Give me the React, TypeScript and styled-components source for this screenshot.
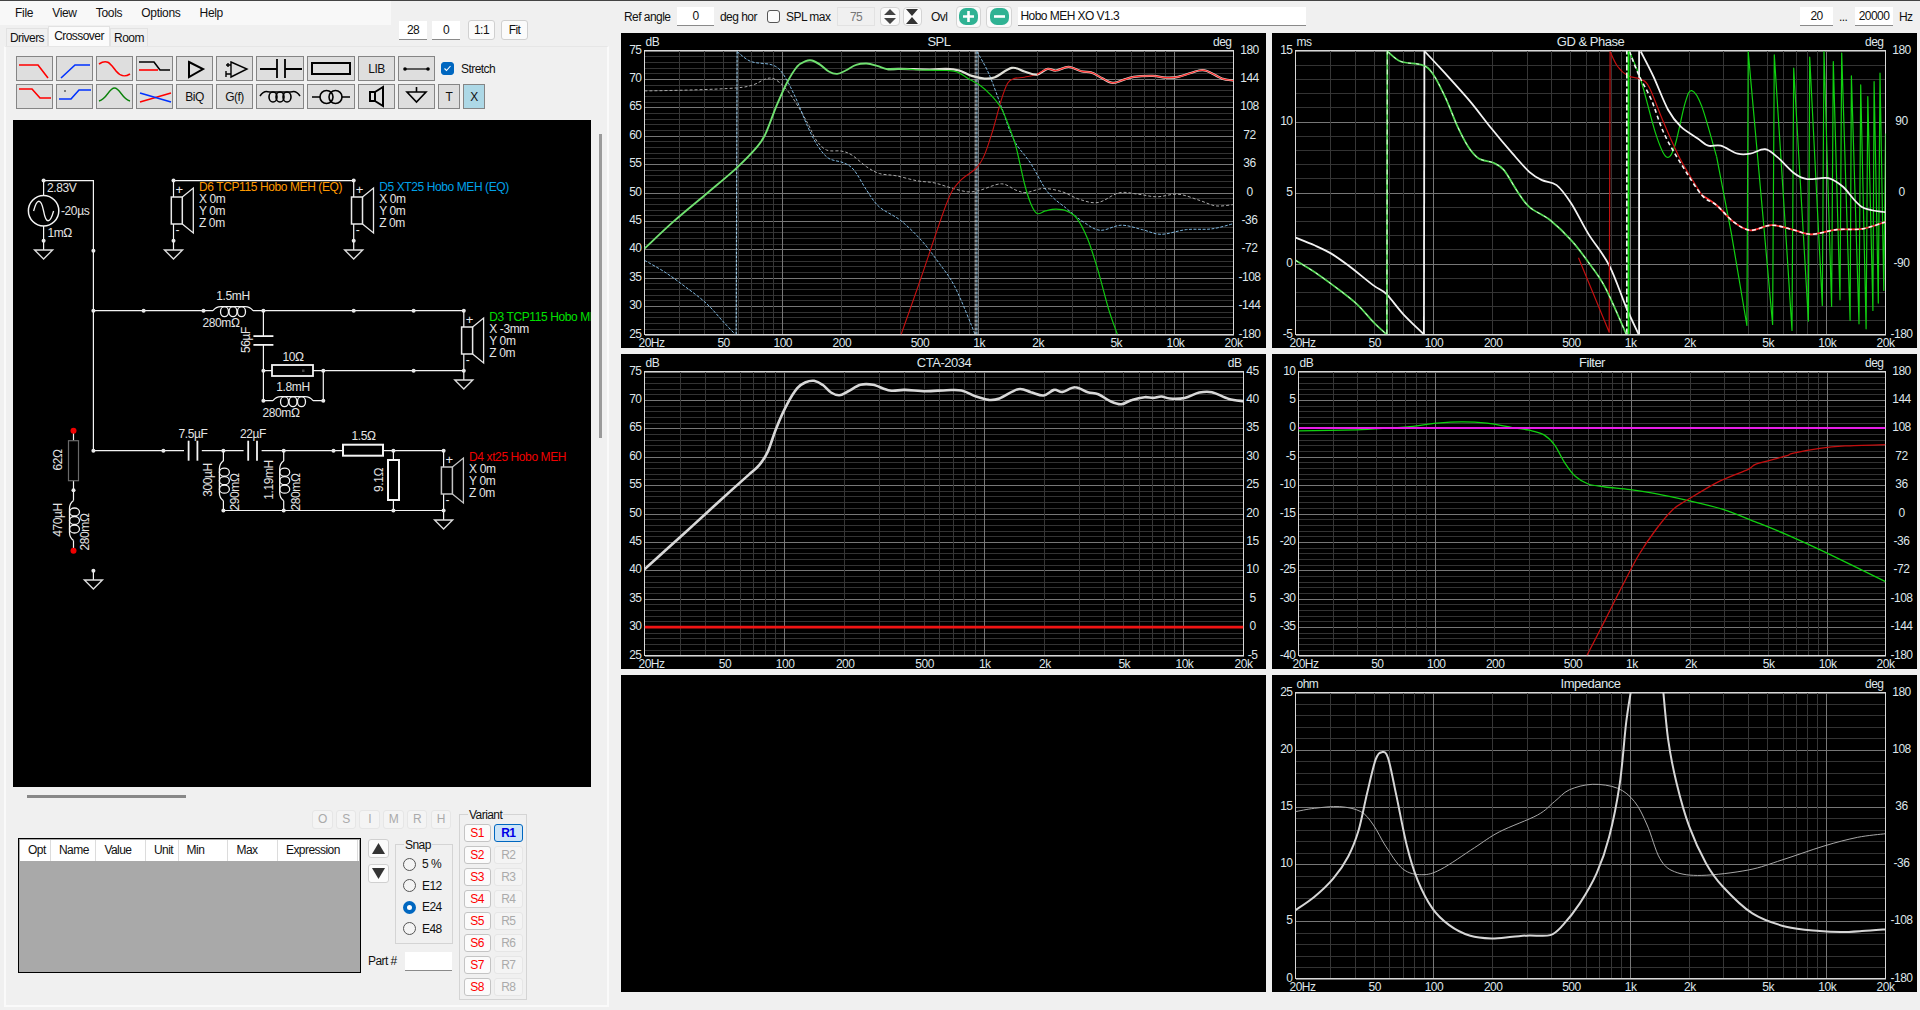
import React from 'react'
import styled, { createGlobalStyle } from 'styled-components'

const FONT = '"Liberation Sans", Arial, sans-serif'

const GlobalStyle = createGlobalStyle`
  html, body {
    margin: 0;
    padding: 0;
    background: #f0f0f0;
    overflow: hidden;
  }
  * {
    box-sizing: border-box;
  }
`

const Page = styled.div`
  width: 1920px;
  height: 1010px;
  background: #f0f0f0;
  border-top: 1px solid #444;
  display: flex;
  font-family: ${FONT};
  font-size: 12px;
  letter-spacing: -0.55px;
  color: #111;
  overflow: hidden;
`

const LeftColumn = styled.div`
  width: 609px;
  flex: none;
`

const MenuBar = styled.div`
  width: 391px;
  height: 24px;
  background: #f8f8f8;
  display: flex;
  align-items: center;
  gap: 19px;
  padding-left: 15px;
  letter-spacing: -0.3px;
`

const TabRow = styled.div`
  height: 21px;
  display: flex;
  align-items: flex-end;
  position: relative;
`

const Tab = styled.div<{ $active?: boolean; $w: number }>`
  width: ${p => p.$w}px;
  height: ${p => (p.$active ? 20 : 18)}px;
  margin-left: ${p => (p.$w === 42 ? 6 : 0)}px;
  padding-bottom: ${p => (p.$active ? 2 : 0)}px;
  background: ${p => (p.$active ? '#fbfbfb' : '#f0f0f0')};
  border: 1px solid #e2e2e2;
  border-bottom: none;
  display: flex;
  align-items: center;
  justify-content: center;
`

const ZoomControls = styled.div`
  display: flex;
  align-items: center;
  gap: 5px;
  margin-left: 251px;
  margin-bottom: 6px;
`

const SmallInput = styled.div<{ $w: number; $disabled?: boolean; $ml?: number; $left?: boolean }>`
  width: ${p => p.$w}px;
  height: 19px;
  margin-left: ${p => p.$ml ?? 0}px;
  background: ${p => (p.$disabled ? '#f0f0f0' : '#fff')};
  border: ${p => (p.$disabled ? '1px solid #e2e2e2' : 'none')};
  border-bottom: ${p => (p.$disabled ? '1px solid #e2e2e2' : '1px solid #8a8a8a')};
  color: ${p => (p.$disabled ? '#777' : '#111')};
  display: flex;
  align-items: center;
  justify-content: ${p => (p.$left ? 'flex-start' : 'center')};
  padding-left: ${p => (p.$left ? 3 : 0)}px;
  flex: none;
`

const PlainButton = styled.div<{ $ml?: number }>`
  width: 27px;
  height: 20px;
  margin-left: ${p => p.$ml ?? 0}px;
  background: #fbfbfb;
  border: 1px solid #d0d0d0;
  border-radius: 3px;
  display: flex;
  align-items: center;
  justify-content: center;
`

const Panel = styled.div`
  margin-left: 4px;
  width: 605px;
  height: 961px;
  background: #f0f0f0;
  border: 2px solid #fafafa;
  border-top: 1px solid #e6e6e6;
  padding: 9px 0 0 7px;
`

const ToolRow = styled.div`
  display: flex;
  align-items: center;
  margin-left: 3px;
  height: 25px;
  margin-bottom: 3px;
`

const ToolButton = styled.div<{ $w?: number; $bg?: string }>`
  width: ${p => p.$w ?? 37}px;
  height: 25px;
  margin-right: 3px;
  flex: none;
  background: ${p => p.$bg ?? '#dedede'};
  border: 1px solid #858585;
  display: flex;
  align-items: center;
  justify-content: center;
  color: #111;

  svg {
    display: block;
  }
`

const CheckBoxMark = styled.div<{ $on?: boolean; $ml?: number }>`
  width: 13px;
  height: 13px;
  margin-left: ${p => p.$ml ?? 0}px;
  border-radius: 3px;
  background: ${p => (p.$on ? '#0067c0' : '#fbfbfb')};
  border: 1px solid ${p => (p.$on ? '#0067c0' : '#555')};
  display: flex;
  align-items: center;
  justify-content: center;
  flex: none;
`

const StretchLabel = styled.span`
  margin-left: 7px;
`

const SchematicRow = styled.div`
  display: flex;
  margin-top: 11px;
`

const SchematicCanvas = styled.div`
  width: 578px;
  height: 667px;
  background: #000;
  overflow: hidden;

  svg {
    display: block;
  }
`

const VScrollThumb = styled.div`
  width: 3.5px;
  height: 304px;
  margin: 14px 0 0 7.5px;
  background: #9a9a9a;
`

const HScrollThumb = styled.div`
  width: 159px;
  height: 2.5px;
  margin: 8px 0 0 14px;
  background: #888;
`

const BottomArea = styled.div`
  display: flex;
  margin: 12px 0 0 5px;
`

const BottomLeft = styled.div`
  width: 434px;
  flex: none;
`

const FlagRow = styled.div`
  display: flex;
  justify-content: flex-end;
  gap: 3.2px;
  height: 19px;
  padding-right: 1px;
`

const FlagButton = styled.div`
  width: 20.5px;
  height: 19px;
  background: #f4f4f4;
  border: 1px solid #e6e6e6;
  border-radius: 3px;
  color: #aaa;
  display: flex;
  align-items: center;
  justify-content: center;
`

const TableRow = styled.div`
  display: flex;
  margin-top: 9px;
`

const PartTable = styled.div`
  width: 342.5px;
  height: 135px;
  flex: none;
  background: #a9a9a9;
  border: 1px solid #000;
  padding: 1px;
`

const TableHead = styled.div`
  display: flex;
  height: 21px;
  background: #fff;
`

const TableCol = styled.div<{ $w: number }>`
  width: ${p => p.$w}px;
  border-right: 1px solid #dcdcdc;
  padding-left: 8px;
  display: flex;
  align-items: center;
  flex: none;
`

const SideArea = styled.div`
  margin-left: 7.5px;
  width: 84px;
`

const SideTop = styled.div`
  display: flex;
  height: 105px;
  margin-top: 1px;
`

const ArrowColumn = styled.div`
  display: flex;
  flex-direction: column;
  gap: 6px;
  width: 21px;
  margin-right: 6px;
`

const ArrowButton = styled.div`
  width: 21px;
  height: 19px;
  background: #fbfbfb;
  border: 1px solid #d0d0d0;
  border-radius: 3px;
  display: flex;
  align-items: center;
  justify-content: center;
`

const GroupBox = styled.div<{ $w: number; $h: number; $mt?: number; $ml?: number }>`
  position: relative;
  width: ${p => p.$w}px;
  height: ${p => p.$h}px;
  margin-top: ${p => p.$mt ?? 0}px;
  margin-left: ${p => p.$ml ?? 0}px;
  border: 1px solid #d4d4d4;
  flex: none;
`

const GroupCaption = styled.span<{ $x: number }>`
  position: absolute;
  top: -6px;
  left: ${p => p.$x}px;
  background: #f0f0f0;
  padding: 0 1px;
  line-height: 12px;
`

const SnapList = styled.div`
  display: flex;
  flex-direction: column;
  gap: 8.5px;
  padding: 13px 0 0 7px;
`

const SnapItem = styled.div`
  display: flex;
  align-items: center;
  height: 13px;
  gap: 6px;
`

const Radio = styled.span<{ $on?: boolean }>`
  width: 13px;
  height: 13px;
  border-radius: 50%;
  flex: none;
  background: ${p => (p.$on ? '#fff' : '#f4f4f4')};
  border: ${p => (p.$on ? '4px solid #0067c0' : '1px solid #555')};
`

const PartRow = styled.div`
  display: flex;
  align-items: center;
  justify-content: space-between;
  margin-top: 8px;
`

const VariantGrid = styled.div`
  display: grid;
  grid-template-columns: 27px 29.5px;
  column-gap: 3px;
  row-gap: 4px;
  padding: 9px 0 0 3.5px;
`

const VariantButton = styled.div<{ $kind: 's' | 'r' | 'sel' }>`
  height: 18px;
  border-radius: 3px;
  display: flex;
  align-items: center;
  justify-content: center;
  font-weight: ${p => (p.$kind === 'sel' ? 700 : 400)};
  background: ${p => (p.$kind === 's' ? '#fbfbfb' : p.$kind === 'sel' ? '#cce4f7' : '#f4f4f4')};
  color: ${p => (p.$kind === 's' ? '#f00' : p.$kind === 'sel' ? '#0000e6' : '#aaa')};
  border: 1px solid ${p => (p.$kind === 's' ? '#c4c4c4' : p.$kind === 'sel' ? '#0067c0' : '#e6e6e6')};
`

const RightColumn = styled.div`
  margin-left: 12px;
  width: 1299px;
  flex: none;
`

const TopBar = styled.div`
  height: 32px;
  display: flex;
  align-items: center;
  padding: 0 0 1px 3px;
`

const BarText = styled.span<{ $ml?: number; $w: number }>`
  margin-left: ${p => p.$ml ?? 0}px;
  width: ${p => p.$w}px;
  flex: none;
`

const IconButton = styled.div<{ $w: number; $ml?: number }>`
  width: ${p => p.$w}px;
  height: ${p => (p.$w > 22 ? 22 : 19)}px;
  margin-left: ${p => p.$ml ?? 0}px;
  background: #fbfbfb;
  border: 1px solid #d4d4d4;
  border-radius: 4px;
  display: flex;
  align-items: center;
  justify-content: center;
  flex: none;
`

const ChartGrid = styled.div`
  display: grid;
  grid-template-columns: 645px 644.5px;
  grid-template-rows: 315px 315px 317px;
  column-gap: 6px;
  row-gap: 6px;
`

const ChartPanel = styled.div`
  background: #000;

  svg {
    display: block;
  }
`

type Pt = [number, number]
type Series = { pts: Pt[]; color: string; width: number; dash?: string; straight?: boolean }
type Box = { left: number; top: number; width: number; height: number }

const smoothPath = (p: Pt[]) => {
  let d = `M${p[0][0].toFixed(1)},${p[0][1].toFixed(1)}`
  for (let i = 0; i < p.length - 1; i++) {
    const a = p[Math.max(0, i - 1)]
    const b = p[i]
    const c = p[i + 1]
    const e = p[Math.min(p.length - 1, i + 2)]
    const c1x = b[0] + (c[0] - a[0]) / 6
    const c1y = b[1] + (c[1] - a[1]) / 6
    const c2x = c[0] - (e[0] - b[0]) / 6
    const c2y = c[1] - (e[1] - b[1]) / 6
    d += ` C${c1x.toFixed(1)},${c1y.toFixed(1)} ${c2x.toFixed(1)},${c2y.toFixed(1)} ${c[0].toFixed(1)},${c[1].toFixed(1)}`
  }
  return d
}

const FREQ_LINES = [30, 40, 50, 60, 70, 80, 90, 200, 300, 400, 500, 600, 700, 800, 900, 2000, 3000, 4000, 5000, 6000, 7000, 8000, 9000]
const FREQ_MAJOR = [100, 1000, 10000]
const FREQ_LABELS: [number, string][] = [
  [50, '50'], [100, '100'], [200, '200'], [500, '500'], [1000, '1k'], [2000, '2k'], [5000, '5k'], [10000, '10k'],
]

type ChartProps = {
  title: string
  leftUnit: string
  rightUnit: string
  height: number
  plot: Box
  src: [number, number, number, number]
  left: string[]
  right: string[]
  rightOffset?: number
  series: Series[]
}

const PHASE_DEG = ['180', '144', '108', '72', '36', '0', '-36', '-72', '-108', '-144', '-180']
const LABEL = '#dfe6ea'

const Chart: React.FC<ChartProps> = ({ title, leftUnit, rightUnit, height, plot, src, left, right, rightOffset = 16, series }) => {
  const w = 645
  const fx = (f: number) => plot.left + (plot.width * Math.log(f / 20)) / Math.log(1000)
  const mapPts = (pts: Pt[]): Pt[] =>
    pts.map(([x, y]) => [
      plot.left + ((x - src[0]) / (src[2] - src[0])) * plot.width,
      plot.top + ((y - src[1]) / (src[3] - src[1])) * plot.height,
    ])
  const majors = left.length - 1
  const hLines = Array.from({ length: majors * 5 + 1 }, (_, i) => i)
  const bottom = plot.top + plot.height
  const rightEdge = plot.left + plot.width
  const clipId = `clip-${title.replace(/\W/g, '')}`
  return (
    <ChartPanel>
      <svg width={w} height={height} fontFamily={FONT} fontSize="12" letterSpacing="-0.5">
        <g shapeRendering="crispEdges" strokeWidth="1">
          {hLines.map(i => (
            <line
              key={i}
              x1={plot.left}
              x2={rightEdge}
              y1={Math.round(plot.top + (plot.height * i) / (majors * 5)) + 0.5}
              y2={Math.round(plot.top + (plot.height * i) / (majors * 5)) + 0.5}
              stroke={i % 5 === 0 ? '#777' : '#333'}
            />
          ))}
          {FREQ_LINES.map(f => (
            <line key={f} x1={Math.round(fx(f)) + 0.5} x2={Math.round(fx(f)) + 0.5} y1={plot.top} y2={bottom} stroke="#363636" />
          ))}
          {FREQ_MAJOR.map(f => (
            <line key={f} x1={Math.round(fx(f)) + 0.5} x2={Math.round(fx(f)) + 0.5} y1={plot.top} y2={bottom} stroke="#777" />
          ))}
          <rect x={plot.left} y={plot.top} width={plot.width} height={plot.height} fill="none" stroke="#d8d8d8" />
        </g>
        <clipPath id={clipId}>
          <rect x={plot.left} y={plot.top} width={plot.width} height={plot.height} />
        </clipPath>
        <g clipPath={`url(#${clipId})`} fill="none" strokeLinejoin="round">
          {series.map((s, i) => {
            const m = mapPts(s.pts)
            const d = s.straight ? m.map((p, j) => `${j ? 'L' : 'M'}${p[0].toFixed(1)},${p[1].toFixed(1)}`).join(' ') : smoothPath(m)
            return <path key={i} d={d} stroke={s.color} strokeWidth={s.width} strokeDasharray={s.dash} />
          })}
        </g>
        <g fill={LABEL}>
          <text x={plot.left + 1} y={12.5}>{leftUnit}</text>
          <text x={plot.left + plot.width / 2} y={13} textAnchor="middle" fontSize="13">{title}</text>
          <text x={rightEdge - 2} y={12.5} textAnchor="end">{rightUnit}</text>
          {left.map((t, i) => (
            <text key={i} x={plot.left - 3} y={plot.top + (plot.height * i) / majors + 3} textAnchor="end">{t}</text>
          ))}
          {right.map((t, i) => (
            <text key={i} x={rightEdge + rightOffset} y={plot.top + (plot.height * i) / (right.length - 1) + 3} textAnchor="middle">{t}</text>
          ))}
          <text x={plot.left + 7} y={bottom + 12} textAnchor="middle">20Hz</text>
          {FREQ_LABELS.map(([f, t]) => (
            <text key={f} x={fx(f) + 1} y={bottom + 12} textAnchor="middle">{t}</text>
          ))}
          <text x={rightEdge} y={bottom + 12} textAnchor="middle">20k</text>
        </g>
      </svg>
    </ChartPanel>
  )
}

// curve points are traced in plot coordinates of each chart
const SPL_TAIL: Pt[] = [[1015, 224], [1040, 207], [1060, 212], [1090, 201], [1120, 214], [1145, 218], [1170, 235], [1195, 249], [1220, 240], [1245, 231], [1290, 228], [1320, 233], [1350, 231], [1400, 212], [1420, 214], [1455, 236], [1482, 242]]
const SPL_GREEN_A: Pt[] = [[82, 745], [150, 665], [230, 580], [300, 505], [350, 440], [370, 400], [395, 320], [420, 250], [445, 200], [465, 184], [480, 182], [500, 195], [520, 215], [540, 222], [560, 212], [585, 195], [610, 191], [635, 198], [660, 208], [690, 207]]
const SPL_GREEN_B: Pt[] = [[660, 208], [690, 207], [720, 209], [760, 211], [800, 212], [825, 216], [850, 235], [880, 257], [905, 285], [930, 325], [950, 385], [965, 440], [985, 550], [1000, 610], [1015, 640], [1035, 632], [1060, 627], [1085, 632], [1110, 655], [1135, 715], [1160, 810], [1185, 925], [1206, 1002]]
const SPL_BLUE = '#7db6de'
const SPL_SERIES: Series[] = [
  { color: '#aaa', width: 1, dash: '3 2', pts: [[82, 273], [200, 270], [300, 264], [340, 255], [370, 237], [390, 237], [415, 262], [440, 305], [470, 370], [490, 420], [515, 450], [550, 453], [575, 465], [610, 500], [640, 520], [680, 527], [730, 542], [770, 548], [810, 563], [850, 575], [880, 570], [930, 551], [965, 570], [990, 577], [1030, 565], [1075, 575], [1115, 597], [1160, 607], [1210, 578], [1255, 582], [1300, 590], [1350, 582], [1400, 600], [1440, 617], [1482, 613]] },
  { color: SPL_BLUE, width: 1, dash: '3 1.5', pts: [[82, 780], [130, 815], [180, 860], [230, 910], [270, 965], [298, 1002]] },
  { color: SPL_BLUE, width: 1, dash: '3 1.5', pts: [[302, 155], [335, 185], [385, 195], [410, 220], [440, 290], [470, 380], [495, 440], [520, 475], [555, 488], [580, 510], [610, 570], [640, 620], [690, 660], [740, 720], [780, 785], [820, 860], [868, 1002]] },
  { color: SPL_BLUE, width: 1, dash: '3 1.5', pts: [[872, 155], [900, 220], [930, 320], [960, 420], [1000, 490], [1040, 575], [1085, 625], [1125, 665], [1165, 690], [1215, 675], [1265, 688], [1310, 702], [1370, 688], [1430, 686], [1482, 670]] },
  { color: '#9fcbe6', width: 1.2, dash: '3 1', straight: true, pts: [[300, 1002], [302, 152]] },
  { color: '#9fcbe6', width: 1.2, dash: '3 1', straight: true, pts: [[872, 1002], [872, 152]] },
  { color: '#cfcfcf', width: 1, dash: '3 1', straight: true, pts: [[868, 1002], [868, 152]] },
  { color: '#c41010', width: 1.1, pts: [[692, 1002], [740, 830], [800, 610], [830, 545], [870, 505], [890, 465], [910, 390], [930, 300], [945, 250], [960, 236], [985, 232], [1015, 224]] },
  { color: '#e0e0d8', width: 2.2, pts: [[660, 208], [690, 207], [760, 209], [800, 207], [830, 212], [860, 228], [890, 236], [915, 232], [955, 204], [985, 215], ...SPL_TAIL] },
  { color: '#ff2a2a', width: 1.2, pts: SPL_TAIL },
  { color: '#10c810', width: 1.2, pts: SPL_GREEN_B },
  { color: '#70e070', width: 1.9, pts: SPL_GREEN_A },
]

const GD_MID: Pt[] = [[304, 155], [335, 185], [385, 195], [410, 220], [440, 290], [470, 380], [495, 440], [520, 475], [555, 488], [580, 510], [610, 570], [640, 620], [690, 660], [740, 720], [780, 785], [820, 860], [870, 1000]]
const GD_START: Pt[] = [[85, 780], [130, 815], [180, 860], [230, 910], [270, 965], [300, 1000]]
const GD_TAIL: Pt[] = [[878, 155], [900, 225], [930, 300], [960, 400], [1000, 490], [1050, 585], [1085, 615], [1125, 665], [1165, 690], [1215, 675], [1265, 688], [1310, 702], [1370, 688], [1430, 686], [1486, 665]]
const GD_SERIES: Series[] = [
  { color: '#10d010', width: 1.2, straight: true, pts: [[1085, 470], [1120, 700], [1157, 975], [1160, 155], [1218, 972], [1222, 165], [1264, 990], [1268, 205], [1303, 962], [1306, 172], [1336, 915], [1340, 155], [1358, 918], [1362, 185], [1378, 898], [1382, 160], [1402, 960], [1405, 228], [1423, 970], [1427, 255], [1440, 985], [1444, 290], [1456, 930], [1459, 245], [1469, 908], [1473, 220], [1482, 870], [1486, 400]] },
  { color: '#10d010', width: 1.2, pts: [[878, 155], [905, 240], [940, 400], [965, 470], [985, 440], [1010, 310], [1026, 272], [1050, 320], [1085, 470]] },
  { color: '#f2f2f2', width: 1.8, pts: [[85, 712], [130, 735], [170, 760], [210, 795], [270, 855], [300, 880], [340, 940], [390, 1002]] },
  { color: '#f2f2f2', width: 1.8, straight: true, pts: [[390, 1002], [391, 152]] },
  { color: '#f2f2f2', width: 1.8, pts: [[392, 155], [440, 220], [500, 305], [550, 385], [600, 460], [640, 515], [670, 540], [705, 555], [740, 610], [780, 700], [830, 795], [870, 920], [900, 1002]] },
  { color: '#f2f2f2', width: 1.8, straight: true, pts: [[901, 1002], [901, 152]] },
  { color: '#f2f2f2', width: 1.8, pts: [[905, 155], [935, 230], [970, 330], [1000, 380], [1040, 415], [1065, 437], [1095, 437], [1135, 461], [1165, 461], [1200, 447], [1230, 472], [1270, 520], [1300, 537], [1350, 534], [1385, 560], [1430, 620], [1486, 636]] },
  { color: '#c40f0f', width: 1.2, straight: true, pts: [[757, 772], [830, 995], [832, 155]] },
  { color: '#c40f0f', width: 1.2, pts: [[832, 155], [850, 200], [875, 228], [905, 238], [925, 262], [960, 370], [1000, 480], [1050, 585]] },
  { color: '#ff3030', width: 1.8, pts: [[1050, 585], [1085, 615], [1125, 665], [1165, 690], [1215, 675], [1265, 688], [1310, 702], [1370, 688], [1430, 686], [1486, 665]] },
  { color: '#f5f5f5', width: 1.6, dash: '4 3', pts: GD_TAIL },
  { color: '#f5f5f5', width: 1.8, dash: '6 2', straight: true, pts: [[872, 1002], [872, 152]] },
  { color: '#10e010', width: 1.8, straight: true, pts: [[876, 1002], [876, 155]] },
  { color: '#56d856', width: 1.8, pts: GD_START },
  { color: '#56d856', width: 1.8, pts: GD_MID },
  { color: '#e8ffe8', width: 0.9, dash: '3 5', pts: GD_START },
  { color: '#e8ffe8', width: 0.9, dash: '3 5', pts: GD_MID },
  { color: '#56d856', width: 1.8, straight: true, pts: [[302, 1002], [303, 152]] },
  { color: '#f0fff0', width: 1, dash: '5 5', straight: true, pts: [[302, 1002], [303, 152]] },
]

const CTA_SERIES: Series[] = [
  { color: '#f01414', width: 2.6, straight: true, pts: [[82, 831], [1505, 831]] },
  { color: '#d8d8d8', width: 2.6, pts: [[82, 658], [130, 603], [180, 546], [230, 488], [290, 419], [330, 374], [355, 345], [375, 305], [395, 235], [420, 165], [445, 115], [465, 97], [485, 93], [505, 105], [525, 128], [545, 136], [565, 125], [595, 105], [625, 105], [665, 122], [700, 120], [750, 124], [800, 121], [835, 122], [870, 140], [900, 150], [925, 146], [970, 118], [1000, 127], [1030, 137], [1055, 120], [1075, 126], [1105, 112], [1135, 127], [1160, 133], [1190, 155], [1215, 163], [1240, 150], [1270, 142], [1290, 144], [1310, 140], [1330, 146], [1365, 144], [1400, 128], [1430, 127], [1470, 147], [1505, 154]] },
]

const FILTER_SERIES: Series[] = [
  { color: '#10d010', width: 1.3, pts: [[92, 243], [230, 240], [300, 235], [350, 231], [420, 220], [480, 216], [540, 220], [600, 233], [640, 241], [675, 255], [700, 285], [725, 340], [750, 380], [780, 402], [820, 411], [880, 419], [940, 431], [1015, 451], [1100, 478], [1180, 517], [1250, 553], [1340, 605], [1486, 695]] },
  { color: '#e61ee6', width: 2, straight: true, pts: [[92, 234], [1486, 234]] },
  { color: '#c40f0f', width: 1.3, pts: [[777, 916], [820, 810], [860, 710], [900, 615], [940, 540], [980, 480], [1015, 450], [1090, 395], [1160, 358], [1180, 342], [1250, 318], [1265, 310], [1330, 295], [1390, 288], [1486, 284]] },
]

const IMPEDANCE_SERIES: Series[] = [
  { color: '#a8a8a8', width: 1, pts: [[85, 425], [130, 415], [190, 410], [240, 425], [270, 465], [300, 530], [340, 597], [385, 614], [430, 598], [510, 533], [570, 485], [660, 435], [700, 395], [735, 360], [790, 343], [850, 355], [890, 395], [920, 465], [950, 565], [985, 605], [1050, 616], [1160, 600], [1240, 570], [1340, 528], [1420, 502], [1486, 491]] },
  { color: '#d6d6d6', width: 2, pts: [[85, 720], [130, 680], [175, 625], [210, 560], [235, 480], [255, 370], [275, 270], [290, 247], [305, 265], [325, 380], [350, 530], [375, 630], [410, 715], [450, 765], [500, 797], [550, 805], [600, 800], [640, 796], [690, 795], [720, 765], [760, 700], [800, 610], [830, 500], [855, 340], [870, 160], [882, 60]] },
  { color: '#d6d6d6', width: 2, pts: [[958, 60], [970, 210], [990, 340], [1020, 470], [1060, 580], [1100, 650], [1170, 730], [1250, 770], [1330, 783], [1380, 786], [1430, 783], [1486, 778]] },
]

// schematic parts, coordinates are page pixels
const WIRE = '#f4f4f4'

const Dot: React.FC<{ x: number; y: number; red?: boolean }> = ({ x, y, red }) => (
  <circle cx={x} cy={y} r={red ? 3 : 2} fill={red ? '#f00000' : '#e8e8e8'} />
)

const Wire: React.FC<{ d: string }> = ({ d }) => <path d={d} fill="none" stroke={WIRE} strokeWidth="1.2" />

const Ground: React.FC<{ x: number; y: number }> = ({ x, y }) => (
  <path d={`M${x - 9},${y} L${x + 9},${y} L${x},${y + 9} Z`} fill="none" stroke="#dcdcdc" strokeWidth="1.4" />
)

const Coil: React.FC<{ x: number; y: number; rot?: number }> = ({ x, y, rot = 0 }) => (
  <g transform={`translate(${x},${y}) rotate(${rot})`} fill="none" stroke={WIRE} strokeWidth="1.3">
    <path d="M-20,0 Q-17,-4 -12,-4 L12,-4 Q17,-4 20,0" />
    <ellipse cx="-8.5" cy="1" rx="4" ry="5" />
    <ellipse cx="0" cy="1" rx="4" ry="5" />
    <ellipse cx="8.5" cy="1" rx="4" ry="5" />
  </g>
)

const Cap: React.FC<{ x: number; y: number; vertical?: boolean }> = ({ x, y, vertical }) => (
  <g transform={`translate(${x},${y}) rotate(${vertical ? 90 : 0})`} stroke={WIRE} strokeWidth="1.8">
    <line x1="-4.4" x2="-4.4" y1="-10" y2="10" />
    <line x1="4.4" x2="4.4" y1="-10" y2="10" />
  </g>
)

const Speaker: React.FC<{ x: number; y: number; color: string; lines: string[]; stroke?: string }> = ({ x, y, color, lines, stroke = '#e8e8e8' }) => {
  const left = x - 2.2
  return (
    <g>
      <rect x={left} y={y} width={11} height={27} fill="#000" stroke={stroke} strokeWidth="1.5" />
      <path d={`M${left + 11},${y} L${left + 22},${y - 9} L${left + 22},${y + 36} L${left + 11},${y + 27}`} fill="none" stroke={stroke} strokeWidth="1.3" />
      <text x={x + 2} y={y - 3.5} fill="#e8e8e8" fontSize="13">+</text>
      <text x={x + 2} y={y + 37} fill="#e8e8e8">-</text>
      <text x={x + 25.5} y={y - 6} fill={color}>{lines[0]}</text>
      {lines.slice(1).map((t, i) => (
        <text key={t} x={x + 25.5} y={y + 6 + i * 12} fill="#e4e4e4">{t}</text>
      ))}
    </g>
  )
}

const VText: React.FC<{ x: number; y: number; children: React.ReactNode }> = ({ x, y, children }) => (
  <text transform={`translate(${x},${y}) rotate(-90)`} textAnchor="middle" fill="#e4e4e4">{children}</text>
)

const CText: React.FC<{ x: number; y: number; children: React.ReactNode }> = ({ x, y, children }) => (
  <text x={x} y={y} textAnchor="middle" fill="#e4e4e4">{children}</text>
)

const Schematic: React.FC = () => (
  <SchematicCanvas>
    <svg width="578" height="667" viewBox="13 120 578 667" fontFamily={FONT} fontSize="12" letterSpacing="-0.4">
      {/* source */}
      <Wire d="M43.6,241 V226 M43.6,195 V180.6 H93.4 V450.7 M43.6,241 V250" />
      <circle cx="43.6" cy="210.7" r="15.2" fill="none" stroke={WIRE} strokeWidth="1.5" />
      <path d="M33.6,211 C37,198 41,198 43.6,211 C46,224 50,224 53.6,211" fill="none" stroke={WIRE} strokeWidth="1.3" />
      <Dot x={43.6} y={180.6} />
      <Dot x={43.6} y={240.7} />
      <Dot x={93.4} y={250.7} />
      <Ground x={43.6} y={250} />
      <text x={47} y={192} fill="#e4e4e4">2.83V</text>
      <text x={61} y={215} fill="#e4e4e4">-20µs</text>
      <text x={47.5} y={237} fill="#e4e4e4">1mΩ</text>

      {/* EQ drivers */}
      <Wire d="M173.5,180.6 H353.7 M173.5,180.6 V197 M353.7,180.6 V197 M173.5,224 V250 M353.7,224 V250" />
      <Dot x={173.5} y={180.6} />
      <Dot x={353.7} y={180.6} />
      <Dot x={173.5} y={240.7} />
      <Dot x={353.7} y={240.7} />
      <Ground x={173.5} y={250} />
      <Ground x={353.7} y={250} />
      <Speaker x={173.5} y={197} color="#ff9900" lines={['D6 TCP115 Hobo MEH (EQ)', 'X 0m', 'Y 0m', 'Z 0m']} />
      <Speaker x={353.7} y={197} color="#00a2e8" lines={['D5 XT25 Hobo MEH (EQ)', 'X 0m', 'Y 0m', 'Z 0m']} />

      {/* woofer branch */}
      <Wire d="M93.4,310.7 H213 M253,310.7 H463.8 V327 M463.8,354 V380 M263.4,310.7 V336 M263.4,345 V400.7 M263.4,370.7 H272 M313,370.7 H463.8 M323.3,370.7 V400.7 M263.4,400.7 H273 M313,400.7 H323.3" />
      <Coil x={233} y={310.7} />
      <Coil x={293} y={400.7} />
      <Cap x={263.4} y={340.5} vertical />
      <rect x="272" y="365" width="41" height="11" fill="#000" stroke={WIRE} strokeWidth="1.8" />
      <rect x="302" y="369.5" width="2.5" height="2.5" fill="#444" />
      {[[93.4, 310.7], [143.6, 310.7], [203.5, 310.7], [263.4, 310.7], [353.7, 310.7], [413.6, 310.7], [463.8, 310.7], [263.4, 370.7], [323.3, 370.7], [413.6, 370.7], [463.8, 370.7], [263.4, 400.7], [323.3, 400.7]].map(([x, y]) => (
        <Dot key={`${x}-${y}`} x={x} y={y} />
      ))}
      <CText x={233} y={300}>1.5mH</CText>
      <CText x={221} y={327}>280mΩ</CText>
      <VText x={250} y={340}>56µF</VText>
      <CText x={293} y={361}>10Ω</CText>
      <CText x={293} y={391}>1.8mH</CText>
      <CText x={281} y={417}>280mΩ</CText>
      <Speaker x={463.8} y={327} color="#00e000" lines={['D3 TCP115 Hobo MEH', 'X -3mm', 'Y 0m', 'Z 0m']} />
      <Ground x={463.8} y={380} />

      {/* tweeter branch */}
      <Wire d="M93.4,450.7 H184 M201.8,450.7 H243.6 M261.6,450.7 H343 M383,450.7 H443.6 V467 M443.6,494 V520 M393.4,450.7 V460 M393.4,500 V510.5 M223.4,510.5 H443.6 M223.4,450.7 V461 M223.4,500.7 V510.5 M283.7,450.7 V461 M283.7,500.7 V510.5" />
      <Cap x={193} y={450.7} />
      <Cap x={252.6} y={450.7} />
      <rect x="343" y="444.7" width="40" height="11" fill="#000" stroke={WIRE} strokeWidth="2" />
      <rect x="388" y="460" width="11" height="40" fill="#000" stroke={WIRE} strokeWidth="2" />
      <Coil x={223.4} y={480.7} rot={-90} />
      <Coil x={283.7} y={480.7} rot={-90} />
      {[[93.4, 450.7], [163.4, 450.7], [223.4, 450.7], [283.7, 450.7], [333.5, 450.7], [393.4, 450.7], [443.6, 450.7], [223.4, 510.5], [283.7, 510.5], [393.4, 510.5], [443.6, 510.5]].map(([x, y]) => (
        <Dot key={`${x}-${y}`} x={x} y={y} />
      ))}
      <CText x={193} y={438}>7.5µF</CText>
      <CText x={253} y={438}>22µF</CText>
      <CText x={363.5} y={440}>1.5Ω</CText>
      <VText x={212} y={480}>300µH</VText>
      <VText x={239} y={492}>290mΩ</VText>
      <VText x={272.5} y={480}>1.19mH</VText>
      <VText x={300} y={492}>280mΩ</VText>
      <VText x={382.5} y={480}>9.1Ω</VText>
      <Speaker x={443.6} y={467} color="#f00000" stroke="#c4c4c4" lines={['D4 xt25 Hobo MEH', 'X 0m', 'Y 0m', 'Z 0m']} />
      <Ground x={443.6} y={520} />

      {/* parked parts */}
      <Wire d="M73.5,430.7 V440.7 M73.5,480.7 V500.5 M73.5,540.5 V550.7" />
      <rect x="68.5" y="440.7" width="10" height="40" fill="#000" stroke="#6a6a6a" strokeWidth="1.2" />
      <Coil x={73.5} y={520.5} rot={-90} />
      <Dot x={73.5} y={430.7} red />
      <Dot x={73.5} y={490.3} />
      <Dot x={73.5} y={550.7} red />
      <VText x={61.5} y={460}>62Ω</VText>
      <VText x={61.5} y={520}>470µH</VText>
      <VText x={89} y={532}>280mΩ</VText>
      <Wire d="M93.4,570.7 V580" />
      <Dot x={93.4} y={570.7} />
      <Ground x={93.4} y={580} />
    </svg>
  </SchematicCanvas>
)

// toolbar icons
const Glyph: React.FC<{ w?: number; children: React.ReactNode }> = ({ w = 35, children }) => (
  <svg width={w} height="23" viewBox={`0 0 ${w} 23`} fill="none" strokeWidth="1.6">
    {children}
  </svg>
)

const Toolbar: React.FC = () => (
  <>
    <ToolRow>
      <ToolButton><Glyph><path d="M2,8 H21 L31,21" stroke="#f00" /></Glyph></ToolButton>
      <ToolButton><Glyph><path d="M4,21 L18,8 H33" stroke="#0032ff" /></Glyph></ToolButton>
      <ToolButton><Glyph><path d="M2,7 C11,1 14,8 19,14 C24,20 28,20 33,17" stroke="#f00" /></Glyph></ToolButton>
      <ToolButton>
        <Glyph>
          <path d="M2,5 H17 L23,13 H33" stroke="#000" />
          <path d="M2,13 H21" stroke="#f00" />
        </Glyph>
      </ToolButton>
      <ToolButton><Glyph><path d="M12,5 L26,12 L12,20 Z" stroke="#000" strokeWidth="2" /></Glyph></ToolButton>
      <ToolButton>
        <Glyph>
          <path d="M14,5 L30,12 L14,20 Z M9,8 H14 M9,17 H14 M11,6 V10 M9,14 V20" stroke="#000" strokeWidth="1.4" />
        </Glyph>
      </ToolButton>
      <ToolButton $w={48}>
        <Glyph w={46}><path d="M3,12 H20 M20,2 V21 M28,2 V21 M28,12 H45" stroke="#000" strokeWidth="1.8" /></Glyph>
      </ToolButton>
      <ToolButton $w={48}>
        <Glyph w={46}><rect x="4" y="6" width="38" height="11" stroke="#000" strokeWidth="2" /></Glyph>
      </ToolButton>
      <ToolButton>LIB</ToolButton>
      <ToolButton>
        <Glyph>
          <path d="M6,12 H29" stroke="#000" strokeWidth="1.2" />
          <circle cx="6" cy="12" r="1.8" fill="#000" />
          <circle cx="29" cy="12" r="1.8" fill="#000" />
        </Glyph>
      </ToolButton>
      <CheckBoxMark $on $ml={3}>
        <svg width="9" height="9" viewBox="0 0 9 9" fill="none"><path d="M1.5,4.5 L3.5,6.5 L7.5,2" stroke="#fff" strokeWidth="1.1" /></svg>
      </CheckBoxMark>
      <StretchLabel>Stretch</StretchLabel>
    </ToolRow>
    <ToolRow>
      <ToolButton><Glyph><path d="M2,4 H15 L23,13 H34" stroke="#f00" /></Glyph></ToolButton>
      <ToolButton>
        <Glyph>
          <path d="M2,14 H14 L22,5 H34" stroke="#0032ff" />
          <circle cx="8" cy="6" r="0.8" fill="#000" />
        </Glyph>
      </ToolButton>
      <ToolButton><Glyph><path d="M2,16 C10,14 12,3 17.5,3 C23,3 25,14 33,16" stroke="#0a820a" /></Glyph></ToolButton>
      <ToolButton>
        <Glyph>
          <path d="M3,17 L34,8" stroke="#f00" />
          <path d="M3,8 L34,17" stroke="#0032ff" />
        </Glyph>
      </ToolButton>
      <ToolButton>BiQ</ToolButton>
      <ToolButton>G(f)</ToolButton>
      <ToolButton $w={48}>
        <Glyph w={46}>
          <path d="M3,11 Q7,5 12,7 M34,7 Q39,5 43,11 M12,7 H34" stroke="#000" />
          <ellipse cx="16" cy="12" rx="4" ry="5" stroke="#000" />
          <ellipse cx="23" cy="12" rx="4" ry="5" stroke="#000" />
          <ellipse cx="30" cy="12" rx="4" ry="5" stroke="#000" />
        </Glyph>
      </ToolButton>
      <ToolButton $w={48}>
        <Glyph w={46}>
          <circle cx="18.5" cy="12" r="6.5" stroke="#000" />
          <circle cx="27.5" cy="12" r="6.5" stroke="#000" />
          <path d="M4,12 H12 M34,12 H42" stroke="#000" />
        </Glyph>
      </ToolButton>
      <ToolButton>
        <Glyph><path d="M11,7 H16 V16 H11 Z M16,7 L24,2 V21 L16,16" stroke="#000" strokeWidth="2" /></Glyph>
      </ToolButton>
      <ToolButton>
        <Glyph><path d="M17.5,2 V7 M8,7 H27 L17.5,17 Z" stroke="#000" strokeWidth="1.6" /></Glyph>
      </ToolButton>
      <ToolButton $w={22}>T</ToolButton>
      <ToolButton $w={22} $bg="#add8e6">X</ToolButton>
    </ToolRow>
  </>
)

const Triangle: React.FC<{ up?: boolean }> = ({ up }) => (
  <svg width="13" height="11" viewBox="0 0 13 11"><path d={up ? 'M6.5,0 L13,11 H0 Z' : 'M0,0 H13 L6.5,11 Z'} fill="#333" /></svg>
)

const COLUMNS: [string, number][] = [['Opt', 31], ['Name', 45.4], ['Value', 49.6], ['Unit', 32.6], ['Min', 49.9], ['Max', 49.5], ['Expression', 80]]
const SNAP = ['5 %', 'E12', 'E24', 'E48']
const FLAGS = ['O', 'S', 'I', 'M', 'R', 'H']
const VARIANTS = [1, 2, 3, 4, 5, 6, 7, 8]

const BottomControls: React.FC = () => (
  <BottomArea>
    <BottomLeft>
      <FlagRow>
        {FLAGS.map(f => <FlagButton key={f}>{f}</FlagButton>)}
      </FlagRow>
      <TableRow>
        <PartTable>
          <TableHead>
            {COLUMNS.map(([name, w]) => <TableCol key={name} $w={w}>{name}</TableCol>)}
          </TableHead>
        </PartTable>
        <SideArea>
          <SideTop>
            <ArrowColumn>
              <ArrowButton><Triangle up /></ArrowButton>
              <ArrowButton><Triangle /></ArrowButton>
            </ArrowColumn>
            <GroupBox $w={57.5} $h={100} $mt={5}>
              <GroupCaption $x={8}>Snap</GroupCaption>
              <SnapList>
                {SNAP.map(s => (
                  <SnapItem key={s}>
                    <Radio $on={s === 'E24'} />
                    <span>{s}</span>
                  </SnapItem>
                ))}
              </SnapList>
            </GroupBox>
          </SideTop>
          <PartRow>
            <span>Part #</span>
            <SmallInput $w={47} />
          </PartRow>
        </SideArea>
      </TableRow>
    </BottomLeft>
    <GroupBox $w={68} $h={186} $mt={4} $ml={7}>
      <GroupCaption $x={8}>Variant</GroupCaption>
      <VariantGrid>
        {VARIANTS.map(n => (
          <React.Fragment key={n}>
            <VariantButton $kind="s">S{n}</VariantButton>
            <VariantButton $kind={n === 1 ? 'sel' : 'r'}>R{n}</VariantButton>
          </React.Fragment>
        ))}
      </VariantGrid>
    </GroupBox>
  </BottomArea>
)

const SQUARE_PLOT: Box = { left: 23.5, top: 17.5, width: 589, height: 284 }

const App: React.FC = () => (
  <Page>
    <GlobalStyle />
    <LeftColumn>
      <MenuBar>
        <span>File</span>
        <span>View</span>
        <span>Tools</span>
        <span>Options</span>
        <span>Help</span>
      </MenuBar>
      <TabRow>
        <Tab $w={42}>Drivers</Tab>
        <Tab $w={62} $active>Crossover</Tab>
        <Tab $w={38}>Room</Tab>
        <ZoomControls>
          <SmallInput $w={28}>28</SmallInput>
          <SmallInput $w={28}>0</SmallInput>
          <PlainButton $ml={3}>1:1</PlainButton>
          <PlainButton $ml={1}>Fit</PlainButton>
        </ZoomControls>
      </TabRow>
      <Panel>
        <Toolbar />
        <SchematicRow>
          <Schematic />
          <VScrollThumb />
        </SchematicRow>
        <HScrollThumb />
        <BottomControls />
      </Panel>
    </LeftColumn>
    <RightColumn>
      <TopBar>
        <BarText $w={53}>Ref angle</BarText>
        <SmallInput $w={37}>0</SmallInput>
        <BarText $ml={6} $w={47}>deg hor</BarText>
        <CheckBoxMark />
        <BarText $ml={6} $w={51}>SPL max</BarText>
        <SmallInput $w={38} $disabled>75</SmallInput>
        <IconButton $w={20} $ml={5}>
          <svg width="14" height="15" viewBox="0 0 14 15"><path d="M7,0 L13,6 H1 Z M1,9 H13 L7,15 Z" fill="#444" /></svg>
        </IconButton>
        <IconButton $w={19} $ml={2.5}>
          <svg width="14" height="15" viewBox="0 0 14 15"><path d="M1,0 H13 L7,7 Z M7,8 L13,15 H1 Z" fill="#333" /></svg>
        </IconButton>
        <BarText $ml={9.5} $w={24.5}>Ovl</BarText>
        <IconButton $w={25}>
          <svg width="19" height="17" viewBox="0 0 19 17"><rect width="19" height="17" rx="7" fill="#2fb293" /><path d="M9.5,3 V14 M4,8.5 H15" stroke="#fff" strokeWidth="2.6" /></svg>
        </IconButton>
        <IconButton $w={26} $ml={5.5}>
          <svg width="19" height="17" viewBox="0 0 19 17"><rect width="19" height="17" rx="7" fill="#2fb293" /><path d="M4,8.5 H15" stroke="#fff" strokeWidth="2.6" /></svg>
        </IconButton>
        <SmallInput $w={288} $ml={5.5} $left>Hobo MEH XO V1.3</SmallInput>
        <SmallInput $w={33} $ml={494.5}>20</SmallInput>
        <BarText $ml={6} $w={16}>...</BarText>
        <SmallInput $w={38}>20000</SmallInput>
        <BarText $ml={6} $w={18}>Hz</BarText>
      </TopBar>
      <ChartGrid>
        <Chart
          title="SPL"
          leftUnit="dB"
          rightUnit="deg"
          height={315}
          plot={SQUARE_PLOT}
          src={[82, 152, 1482, 1002]}
          left={['75', '70', '65', '60', '55', '50', '45', '40', '35', '30', '25']}
          right={PHASE_DEG}
          series={SPL_SERIES}
        />
        <Chart
          title="GD & Phase"
          leftUnit="ms"
          rightUnit="deg"
          height={315}
          plot={{ ...SQUARE_PLOT, width: 590 }}
          src={[85, 152, 1486, 1002]}
          left={['15', '10', '5', '0', '-5']}
          right={['180', '90', '0', '-90', '-180']}
          series={GD_SERIES}
        />
        <Chart
          title="CTA-2034"
          leftUnit="dB"
          rightUnit="dB"
          height={315}
          plot={{ ...SQUARE_PLOT, width: 599 }}
          src={[82, 65, 1505, 916]}
          left={['75', '70', '65', '60', '55', '50', '45', '40', '35', '30', '25']}
          right={['45', '40', '35', '30', '25', '20', '15', '10', '5', '0', '-5']}
          rightOffset={9}
          series={CTA_SERIES}
        />
        <Chart
          title="Filter"
          leftUnit="dB"
          rightUnit="deg"
          height={315}
          plot={{ ...SQUARE_PLOT, left: 26.5, width: 587 }}
          src={[92, 65, 1486, 916]}
          left={['10', '5', '0', '-5', '-10', '-15', '-20', '-25', '-30', '-35', '-40']}
          right={PHASE_DEG}
          series={FILTER_SERIES}
        />
        <ChartPanel />
        <Chart
          title="Impedance"
          leftUnit="ohm"
          rightUnit="deg"
          height={317}
          plot={{ ...SQUARE_PLOT, width: 590, height: 286 }}
          src={[85, 68, 1486, 925]}
          left={['25', '20', '15', '10', '5', '0']}
          right={['180', '108', '36', '-36', '-108', '-180']}
          series={IMPEDANCE_SERIES}
        />
      </ChartGrid>
    </RightColumn>
  </Page>
)

export default App
